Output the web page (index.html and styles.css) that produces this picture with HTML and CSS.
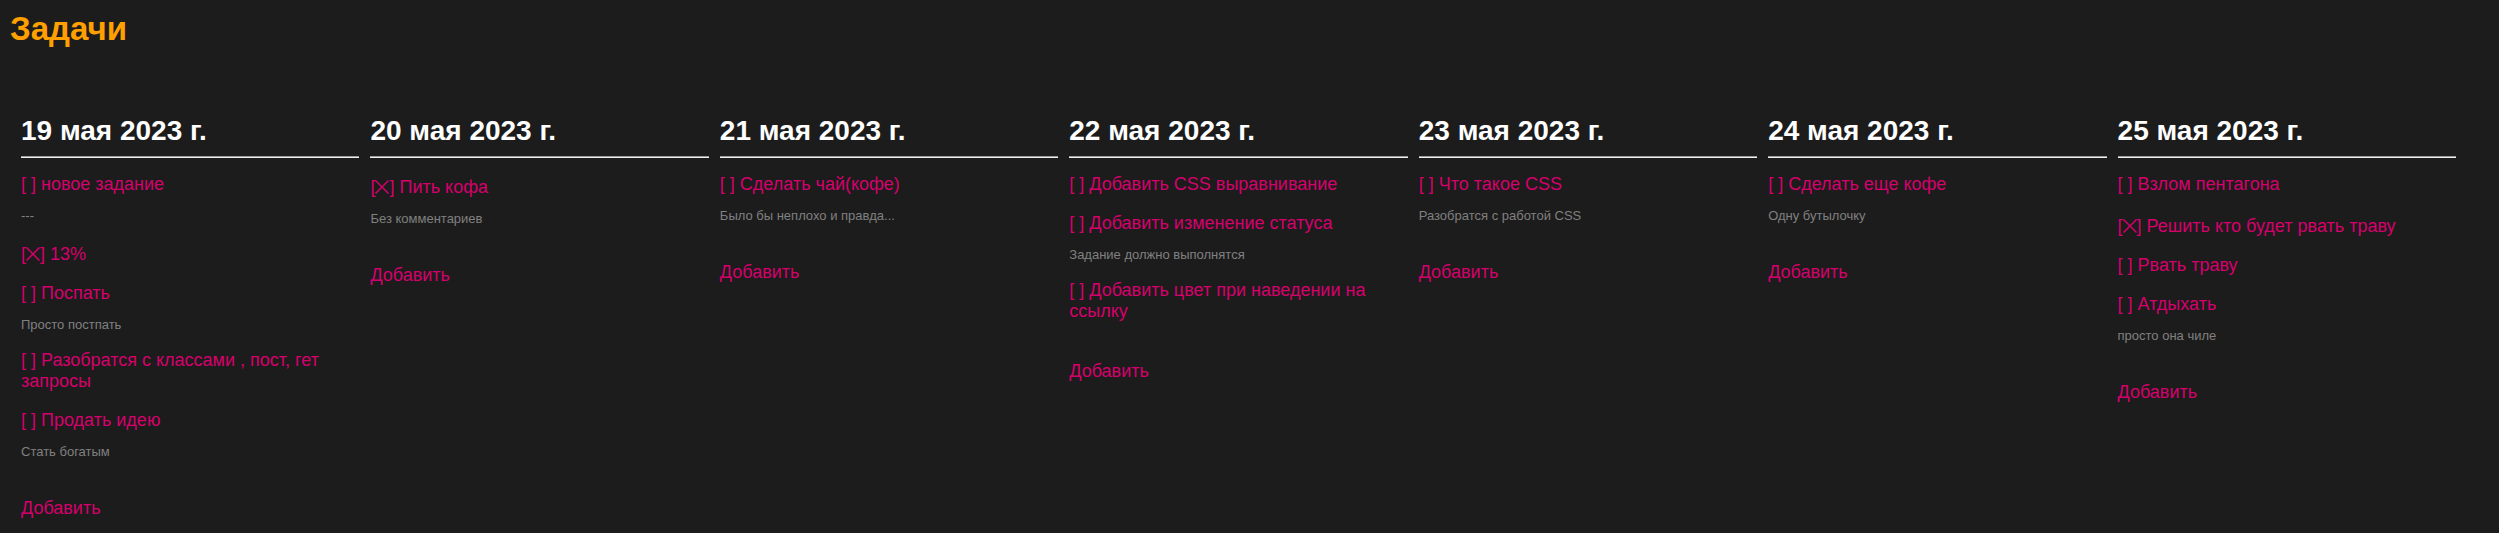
FILE: index.html
```
<!DOCTYPE html>
<html lang="ru">
<head>
<meta charset="utf-8">
<title>Задачи</title>
<link rel="stylesheet" href="styles.css">
</head>
<body>
<svg class="sprite" aria-hidden="true"><symbol id="cross" viewBox="0 0 14 14"><path d="M0.5 0.5L13.5 13.5M13.5 0.5L0.5 13.5" fill="none" stroke="currentColor" stroke-width="1.5"/></symbol></svg>
<h1 class="title">Задачи</h1>
<main class="week">
  <section class="day">
    <h2 class="date">19 мая 2023 г.</h2>
    <a class="task" href="#">[ ] новое задание</a>
    <p class="note">---</p>
    <a class="task done" href="#">[<svg class="cross"><use href="#cross"/></svg>] 13%</a>
    <a class="task" href="#">[ ] Поспать</a>
    <p class="note">Просто постпать</p>
    <a class="task" href="#">[ ] Разобратся с классами , пост, гет запросы</a>
    <a class="task" href="#">[ ] Продать идею</a>
    <p class="note">Стать богатым</p>
    <a class="add" href="#">Добавить</a>
  </section>
  <section class="day">
    <h2 class="date">20 мая 2023 г.</h2>
    <a class="task done" href="#">[<svg class="cross"><use href="#cross"/></svg>] Пить кофа</a>
    <p class="note">Без комментариев</p>
    <a class="add" href="#">Добавить</a>
  </section>
  <section class="day">
    <h2 class="date">21 мая 2023 г.</h2>
    <a class="task" href="#">[ ] Сделать чай(кофе)</a>
    <p class="note">Было бы неплохо и правда...</p>
    <a class="add" href="#">Добавить</a>
  </section>
  <section class="day">
    <h2 class="date">22 мая 2023 г.</h2>
    <a class="task" href="#">[ ] Добавить CSS выравнивание</a>
    <a class="task" href="#">[ ] Добавить изменение статуса</a>
    <p class="note">Задание должно выполнятся</p>
    <a class="task" href="#">[ ] Добавить цвет при наведении на ссылку</a>
    <a class="add" href="#">Добавить</a>
  </section>
  <section class="day">
    <h2 class="date">23 мая 2023 г.</h2>
    <a class="task" href="#">[ ] Что такое CSS</a>
    <p class="note">Разобратся с работой CSS</p>
    <a class="add" href="#">Добавить</a>
  </section>
  <section class="day">
    <h2 class="date">24 мая 2023 г.</h2>
    <a class="task" href="#">[ ] Сделать еще кофе</a>
    <p class="note">Одну бутылочку</p>
    <a class="add" href="#">Добавить</a>
  </section>
  <section class="day">
    <h2 class="date">25 мая 2023 г.</h2>
    <a class="task" href="#">[ ] Взлом пентагона</a>
    <a class="task done" href="#">[<svg class="cross"><use href="#cross"/></svg>] Решить кто будет рвать траву</a>
    <a class="task" href="#">[ ] Рвать траву</a>
    <a class="task" href="#">[ ] Атдыхать</a>
    <p class="note">просто она чиле</p>
    <a class="add" href="#">Добавить</a>
  </section>
</main>
</body>
</html>
```
FILE: styles.css
```
body {
  margin: 0;
  padding: 9px 10px 8px;
  background: #1c1c1c;
  font-family: "Liberation Sans", Arial, sans-serif;
}
.sprite { display: none; }
.title {
  margin: 0 0 61px;
  color: #ffa000;
  font-size: 33px;
  line-height: 40px;
}
.week {
  display: grid;
  grid-template-columns: repeat(7, minmax(0, 1fr));
  column-gap: 11px;
  padding: 0 33px 0 11px;
}
.day { display: flex; flex-direction: column; align-items: flex-start; }
.date {
  align-self: stretch;
  margin: 0;
  padding: 5px 0 9px;
  color: #fff;
  font-size: 28px;
  line-height: 32px;
  box-shadow: 0 1px #9a9a9a, 0 2px #eee;
}
.task, .add {
  margin-top: 18px;
  color: #d6006c;
  font-size: 18px;
  line-height: 21px;
  text-decoration: none;
}
.task:hover, .add:hover { color: #ffa000; }
.done { padding-top: 3px; }
.add { margin-top: 39px; }
.cross { width: 14px; height: 14px; vertical-align: -1px; }
.note {
  margin: 13px 0 0;
  color: #808080;
  font-size: 13px;
  line-height: 15px;
}
```
